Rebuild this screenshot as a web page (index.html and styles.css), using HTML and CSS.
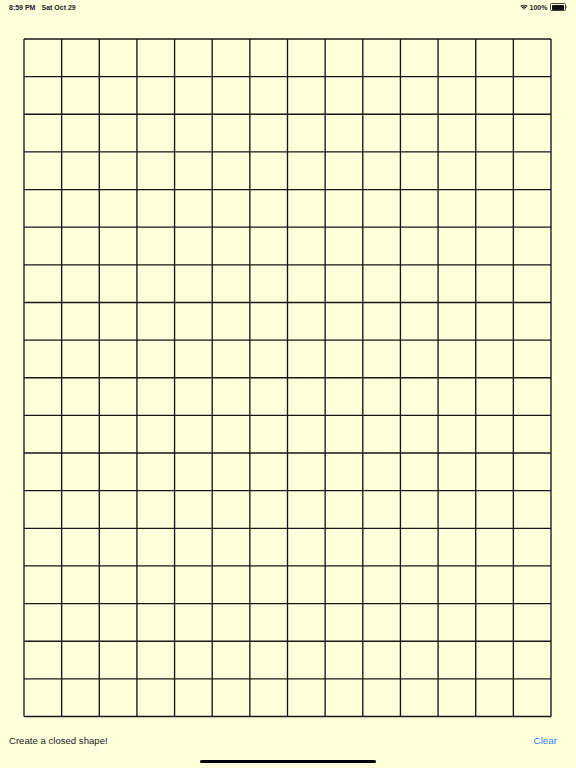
FILE: index.html
```html
<!DOCTYPE html>
<html>
<head>
<meta charset="utf-8">
<link rel="stylesheet" href="styles.css">
</head>
<body>
<div class="screen">
  <div class="status">
    <div class="status-left"><span>8:59 PM</span><span>Sat Oct 29</span></div>
    <div class="status-right">
      <svg class="wifi" width="8" height="6" viewBox="0 0 8 6">
        <path d="M0.3 2.1 A5.4 5.4 0 0 1 7.7 2.1 L6.9 2.9 A4.3 4.3 0 0 0 1.1 2.9 Z" fill="#111"/>
        <path d="M1.6 3.4 A3.5 3.5 0 0 1 6.4 3.4 L5.6 4.2 A2.4 2.4 0 0 0 2.4 4.2 Z" fill="#111"/>
        <path d="M2.9 4.7 A1.6 1.6 0 0 1 5.1 4.7 L4 5.8 Z" fill="#111"/>
      </svg>
      <span class="pct">100%</span>
      <span class="battery"><span class="battery-fill"></span></span><span class="nub"></span>
    </div>
  </div>
  <div class="board">
    <svg class="grid" width="527" height="677.5" viewBox="0 0 527 677.5">
      <g stroke="#161616" stroke-width="1.35" fill="none">
        <line x1="0" y1="0" x2="0" y2="677.5"/>
        <line x1="37.64" y1="0" x2="37.64" y2="677.5"/>
        <line x1="75.29" y1="0" x2="75.29" y2="677.5"/>
        <line x1="112.93" y1="0" x2="112.93" y2="677.5"/>
        <line x1="150.57" y1="0" x2="150.57" y2="677.5"/>
        <line x1="188.21" y1="0" x2="188.21" y2="677.5"/>
        <line x1="225.86" y1="0" x2="225.86" y2="677.5"/>
        <line x1="263.5" y1="0" x2="263.5" y2="677.5"/>
        <line x1="301.14" y1="0" x2="301.14" y2="677.5"/>
        <line x1="338.79" y1="0" x2="338.79" y2="677.5"/>
        <line x1="376.43" y1="0" x2="376.43" y2="677.5"/>
        <line x1="414.07" y1="0" x2="414.07" y2="677.5"/>
        <line x1="451.71" y1="0" x2="451.71" y2="677.5"/>
        <line x1="489.36" y1="0" x2="489.36" y2="677.5"/>
        <line x1="527" y1="0" x2="527" y2="677.5"/>
        <line x1="0" y1="0" x2="527" y2="0"/>
        <line x1="0" y1="37.64" x2="527" y2="37.64"/>
        <line x1="0" y1="75.28" x2="527" y2="75.28"/>
        <line x1="0" y1="112.92" x2="527" y2="112.92"/>
        <line x1="0" y1="150.56" x2="527" y2="150.56"/>
        <line x1="0" y1="188.19" x2="527" y2="188.19"/>
        <line x1="0" y1="225.83" x2="527" y2="225.83"/>
        <line x1="0" y1="263.47" x2="527" y2="263.47"/>
        <line x1="0" y1="301.11" x2="527" y2="301.11"/>
        <line x1="0" y1="338.75" x2="527" y2="338.75"/>
        <line x1="0" y1="376.39" x2="527" y2="376.39"/>
        <line x1="0" y1="414.03" x2="527" y2="414.03"/>
        <line x1="0" y1="451.67" x2="527" y2="451.67"/>
        <line x1="0" y1="489.31" x2="527" y2="489.31"/>
        <line x1="0" y1="526.94" x2="527" y2="526.94"/>
        <line x1="0" y1="564.58" x2="527" y2="564.58"/>
        <line x1="0" y1="602.22" x2="527" y2="602.22"/>
        <line x1="0" y1="639.86" x2="527" y2="639.86"/>
        <line x1="0" y1="677.5" x2="527" y2="677.5"/>
      </g>
    </svg>
  </div>
  <div class="footer">
    <span class="hint">Create a closed shape!</span>
    <span class="clear">Clear</span>
  </div>
  <div class="home-indicator"></div>
</div>
</body>
</html>
```
FILE: styles.css
```css
html, body {
  margin: 0;
  padding: 0;
  background: #ffffdc;
}
.screen {
  position: relative;
  width: 576px;
  height: 768px;
  display: flex;
  flex-direction: column;
  font-family: "Liberation Sans", Arial, sans-serif;
  color: #111;
  overflow: hidden;
}
.status {
  height: 14px;
  display: flex;
  justify-content: space-between;
  align-items: center;
  padding: 0 9px 0 9px;
  font-size: 7px;
  font-weight: bold;
  color: #222;
}
.status-left {
  display: flex;
  gap: 6px;
}
.status-right {
  display: flex;
  align-items: center;
}
.wifi {
  margin-right: 2px;
}
.pct {
  margin-right: 3px;
}
.battery {
  width: 12px;
  height: 5px;
  border: 0.6px solid #444;
  border-radius: 1.5px;
  padding: 0.6px;
  display: flex;
}
.battery-fill {
  flex: 1;
  background: #111;
  border-radius: 0.8px;
}
.nub {
  width: 1px;
  height: 2.4px;
  background: #666;
  border-radius: 0 1px 1px 0;
  margin-left: 0.4px;
}
.board {
  padding: 24.5px 0 0 24px;
  height: 677.5px;
}
.grid {
  display: block;
  overflow: visible;
}
.footer {
  flex: 1;
  display: flex;
  justify-content: space-between;
  align-items: flex-start;
  padding: 19px 19px 0 9px;
  font-size: 9.6px;
}
.hint {
  color: #1c1c1c;
}
.clear {
  color: #2f7cf6;
  font-size: 9.8px;
}
.home-indicator {
  position: absolute;
  left: 200px;
  top: 760px;
  width: 176px;
  height: 3px;
  border-radius: 2px;
  background: #000;
}
```
